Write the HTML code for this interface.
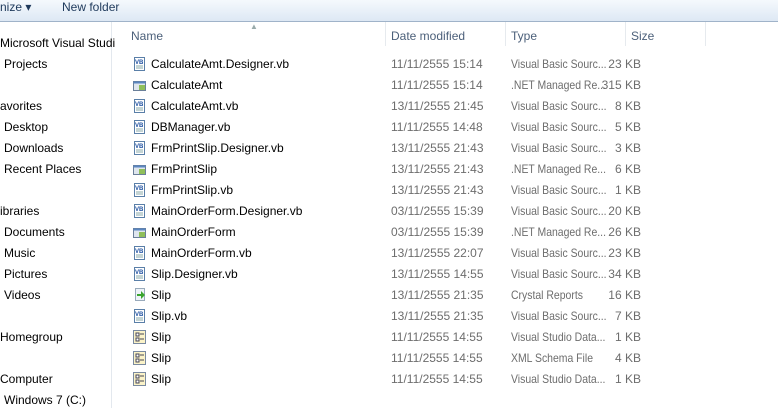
<!DOCTYPE html>
<html><head><style>
body{margin:0;width:778px;height:408px;overflow:hidden;background:#fff;font-family:"Liberation Sans",sans-serif;font-size:12px;position:relative}
.tb{position:absolute;left:0;top:0;width:778px;height:21px;background:linear-gradient(#f5f9fd,#dde8f4);border-bottom:1px solid #a0b3c9}
.t{position:absolute;white-space:nowrap;line-height:14px}
.side{position:absolute;left:111px;top:22px;width:1px;height:386px;background:#e3e8ee}
.h{color:#4c607a}
.div{position:absolute;top:22px;width:1px;height:24px;background:#e6eaee}
.g{color:#6d6d6d}
.ty{transform:scaleX(0.87);transform-origin:0 0}
.ic{position:absolute;width:13px;height:14px}
.sz{position:absolute;left:570px;width:71px;text-align:right;white-space:nowrap;line-height:14px;color:#6d6d6d}
</style></head><body>
<div class="tb"></div>
<div class="t" style="left:0;top:0;color:#1e395b">nize ▾</div>
<div class="t" style="left:62px;top:0;color:#1e395b">New folder</div>
<div class="side"></div>
<div class="t h" style="left:131px;top:29px">Name</div>
<div class="t" style="left:250px;top:20px;color:#9aa;font-size:8px">▲</div>
<div class="div" style="left:385px"></div>
<div class="t h" style="left:391px;top:29px">Date modified</div>
<div class="div" style="left:505px"></div>
<div class="t h" style="left:511px;top:29px">Type</div>
<div class="div" style="left:625px"></div>
<div class="t h" style="left:631px;top:29px">Size</div>
<div class="div" style="left:705px"></div>

<div class="t" style="left:0;top:36px">Microsoft Visual Studi</div>
<div class="t" style="left:4px;top:57px">Projects</div>
<div class="t" style="left:0;top:99px">avorites</div>
<div class="t" style="left:4px;top:120px">Desktop</div>
<div class="t" style="left:4px;top:141px">Downloads</div>
<div class="t" style="left:4px;top:162px">Recent Places</div>
<div class="t" style="left:0;top:204px">ibraries</div>
<div class="t" style="left:4px;top:225px">Documents</div>
<div class="t" style="left:4px;top:246px">Music</div>
<div class="t" style="left:4px;top:267px">Pictures</div>
<div class="t" style="left:4px;top:288px">Videos</div>
<div class="t" style="left:0;top:330px">Homegroup</div>
<div class="t" style="left:0;top:372px">Computer</div>
<div class="t" style="left:4px;top:393px">Windows 7 (C:)</div>

<div id="rows"></div>
<script>
var d=[["CalculateAmt.Designer.vb","11/11/2555 15:14","Visual Basic Sourc...","23 KB","vb"],
["CalculateAmt","11/11/2555 15:14",".NET Managed Re...","315 KB","res"],
["CalculateAmt.vb","13/11/2555 21:45","Visual Basic Sourc...","8 KB","vb"],
["DBManager.vb","11/11/2555 14:48","Visual Basic Sourc...","5 KB","vb"],
["FrmPrintSlip.Designer.vb","13/11/2555 21:43","Visual Basic Sourc...","3 KB","vb"],
["FrmPrintSlip","13/11/2555 21:43",".NET Managed Re...","6 KB","res"],
["FrmPrintSlip.vb","13/11/2555 21:43","Visual Basic Sourc...","1 KB","vb"],
["MainOrderForm.Designer.vb","03/11/2555 15:39","Visual Basic Sourc...","20 KB","vb"],
["MainOrderForm","03/11/2555 15:39",".NET Managed Re...","26 KB","res"],
["MainOrderForm.vb","13/11/2555 22:07","Visual Basic Sourc...","23 KB","vb"],
["Slip.Designer.vb","13/11/2555 14:55","Visual Basic Sourc...","34 KB","vb"],
["Slip","13/11/2555 21:35","Crystal Reports","16 KB","cr"],
["Slip.vb","13/11/2555 21:35","Visual Basic Sourc...","7 KB","vb"],
["Slip","11/11/2555 14:55","Visual Studio Data...","1 KB","ds"],
["Slip","11/11/2555 14:55","XML Schema File","4 KB","ds"],
["Slip","11/11/2555 14:55","Visual Studio Data...","1 KB","ds"]];
var h="";
d.forEach(function(r,i){var y=57+i*21;
var ic;
if(r[4]=="vb")ic='<svg class="ic" style="left:133px;top:'+(y)+'px" viewBox="0 0 13 14"><rect x="1.5" y="0.5" width="10" height="13" fill="#fff" stroke="#5a7fa8"/><text x="2" y="7" font-size="6" fill="#1c4fa0" font-family="Liberation Sans" font-weight="bold">VB</text><line x1="3" y1="9" x2="10" y2="9" stroke="#8aa"/><line x1="3" y1="11" x2="10" y2="11" stroke="#8aa"/></svg>';
else if(r[4]=="res")ic='<svg class="ic" style="left:133px;top:'+(y)+'px" viewBox="0 0 13 14"><rect x="0.5" y="3.5" width="12" height="9" fill="#dfe6ee" stroke="#6a7f99"/><rect x="0.5" y="3.5" width="12" height="2" fill="#5b86c0"/><rect x="6" y="7" width="6" height="5" fill="#8fbf5a"/></svg>';
else if(r[4]=="cr")ic='<svg class="ic" style="left:133px;top:'+(y)+'px" viewBox="0 0 13 14"><rect x="2.5" y="0.5" width="9" height="12" fill="#eef3f8" stroke="#9ab"/><path d="M4 6h4V3l4 4-4 4V8H4z" fill="#3aa52e"/></svg>';
else ic='<svg class="ic" style="left:133px;top:'+(y)+'px" viewBox="0 0 13 14"><rect x="0.5" y="0.5" width="12" height="13" fill="#fbf3c8" stroke="#7a8aa0"/><rect x="3" y="3" width="3" height="3" fill="#fff" stroke="#445"/><rect x="3" y="8" width="3" height="3" fill="#fff" stroke="#445"/><line x1="7" y1="4" x2="11" y2="4" stroke="#445"/><line x1="7" y1="9" x2="11" y2="9" stroke="#445"/></svg>';
h+=ic+'<div class="t" style="left:151px;top:'+y+'px">'+r[0]+'</div><div class="t g" style="left:391px;top:'+y+'px">'+r[1]+'</div><div class="t g ty" style="left:511px;top:'+y+'px">'+r[2]+'</div><div class="sz" style="top:'+y+'px">'+r[3]+'</div>';});
document.getElementById("rows").innerHTML=h;
</script>
</body></html>
